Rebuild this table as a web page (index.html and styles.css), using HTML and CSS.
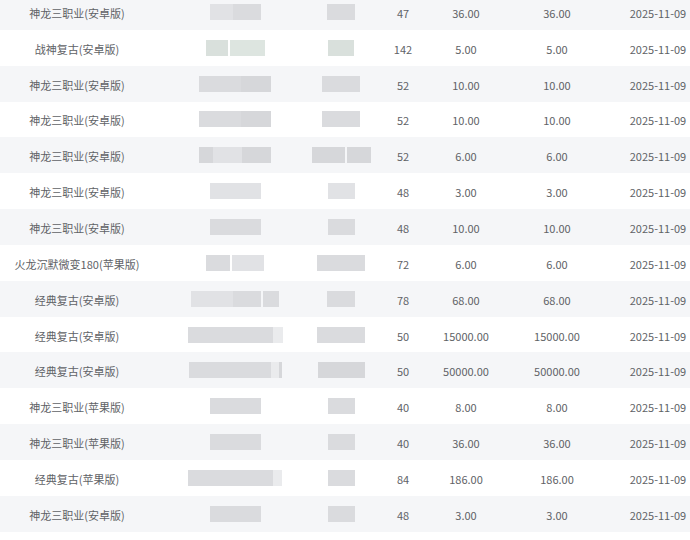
FILE: index.html
```html
<!DOCTYPE html>
<html lang="zh-CN">
<head>
<meta charset="utf-8">
<link rel="stylesheet" href="styles.css">
</head>
<body>
<div class="table">
  <div class="row odd"><div class="c">神龙三职业(安卓版)</div><div class="c"><div class="blur"><i class="s2" style="width:23px"></i><i class="s1" style="width:28px"></i></div></div><div class="c"><div class="blur"><i class="s1" style="width:28px"></i></div></div><div class="c">47</div><div class="c">36.00</div><div class="c">36.00</div><div class="c">2025-11-09</div></div>
  <div class="row"><div class="c">战神复古(安卓版)</div><div class="c"><div class="blur"><i class="g" style="width:22px"></i><i class="gap"></i><i class="g2" style="width:35px"></i></div></div><div class="c"><div class="blur"><i class="g" style="width:26px"></i></div></div><div class="c">142</div><div class="c">5.00</div><div class="c">5.00</div><div class="c">2025-11-09</div></div>
  <div class="row odd"><div class="c">神龙三职业(安卓版)</div><div class="c"><div class="blur"><i class="s1" style="width:42px"></i><i class="s0" style="width:30px"></i></div></div><div class="c"><div class="blur"><i class="s1" style="width:38px"></i></div></div><div class="c">52</div><div class="c">10.00</div><div class="c">10.00</div><div class="c">2025-11-09</div></div>
  <div class="row"><div class="c">神龙三职业(安卓版)</div><div class="c"><div class="blur"><i class="s1" style="width:42px"></i><i class="s0" style="width:30px"></i></div></div><div class="c"><div class="blur"><i class="s1" style="width:38px"></i></div></div><div class="c">52</div><div class="c">10.00</div><div class="c">10.00</div><div class="c">2025-11-09</div></div>
  <div class="row odd"><div class="c">神龙三职业(安卓版)</div><div class="c"><div class="blur"><i class="s0" style="width:14px"></i><i class="s2" style="width:29px"></i><i class="s0" style="width:29px"></i></div></div><div class="c"><div class="blur"><i class="s0" style="width:33px"></i><i class="gap"></i><i class="s0" style="width:24px"></i></div></div><div class="c">52</div><div class="c">6.00</div><div class="c">6.00</div><div class="c">2025-11-09</div></div>
  <div class="row"><div class="c">神龙三职业(安卓版)</div><div class="c"><div class="blur"><i class="s2" style="width:51px"></i></div></div><div class="c"><div class="blur"><i class="s2" style="width:27px"></i></div></div><div class="c">48</div><div class="c">3.00</div><div class="c">3.00</div><div class="c">2025-11-09</div></div>
  <div class="row odd"><div class="c">神龙三职业(安卓版)</div><div class="c"><div class="blur"><i class="s1" style="width:51px"></i></div></div><div class="c"><div class="blur"><i class="s1" style="width:27px"></i></div></div><div class="c">48</div><div class="c">10.00</div><div class="c">10.00</div><div class="c">2025-11-09</div></div>
  <div class="row"><div class="c">火龙沉默微变180(苹果版)</div><div class="c"><div class="blur"><i class="s1" style="width:24px"></i><i class="gap"></i><i class="s2" style="width:32px"></i></div></div><div class="c"><div class="blur"><i class="s1" style="width:48px"></i></div></div><div class="c">72</div><div class="c">6.00</div><div class="c">6.00</div><div class="c">2025-11-09</div></div>
  <div class="row odd"><div class="c">经典复古(安卓版)</div><div class="c"><div class="blur"><i class="s2" style="width:42px"></i><i class="s1" style="width:28px"></i><i class="gap"></i><i class="s1" style="width:16px"></i></div></div><div class="c"><div class="blur"><i class="s1" style="width:28px"></i></div></div><div class="c">78</div><div class="c">68.00</div><div class="c">68.00</div><div class="c">2025-11-09</div></div>
  <div class="row"><div class="c">经典复古(安卓版)</div><div class="c"><div class="blur"><i class="s1" style="width:85px"></i><i class="s3" style="width:10px"></i></div></div><div class="c"><div class="blur"><i class="s1" style="width:48px"></i></div></div><div class="c">50</div><div class="c">15000.00</div><div class="c">15000.00</div><div class="c">2025-11-09</div></div>
  <div class="row odd"><div class="c">经典复古(安卓版)</div><div class="c"><div class="blur"><i class="s1" style="width:82px"></i><i class="s3" style="width:8px"></i><i class="s0" style="width:3px"></i></div></div><div class="c"><div class="blur"><i class="s0" style="width:47px"></i></div></div><div class="c">50</div><div class="c">50000.00</div><div class="c">50000.00</div><div class="c">2025-11-09</div></div>
  <div class="row"><div class="c">神龙三职业(苹果版)</div><div class="c"><div class="blur"><i class="s1" style="width:51px"></i></div></div><div class="c"><div class="blur"><i class="s1" style="width:27px"></i></div></div><div class="c">40</div><div class="c">8.00</div><div class="c">8.00</div><div class="c">2025-11-09</div></div>
  <div class="row odd"><div class="c">神龙三职业(苹果版)</div><div class="c"><div class="blur"><i class="s1" style="width:51px"></i></div></div><div class="c"><div class="blur"><i class="s1" style="width:27px"></i></div></div><div class="c">40</div><div class="c">36.00</div><div class="c">36.00</div><div class="c">2025-11-09</div></div>
  <div class="row"><div class="c">经典复古(苹果版)</div><div class="c"><div class="blur"><i class="s1" style="width:85px"></i><i class="s3" style="width:9px"></i></div></div><div class="c"><div class="blur"><i class="s1" style="width:27px"></i></div></div><div class="c">84</div><div class="c">186.00</div><div class="c">186.00</div><div class="c">2025-11-09</div></div>
  <div class="row odd"><div class="c">神龙三职业(安卓版)</div><div class="c"><div class="blur"><i class="s1" style="width:51px"></i></div></div><div class="c"><div class="blur"><i class="s1" style="width:27px"></i></div></div><div class="c">48</div><div class="c">3.00</div><div class="c">3.00</div><div class="c">2025-11-09</div></div>
</div>
</body>
</html>
```
FILE: styles.css
```css
html, body {
  margin: 0;
  padding: 0;
  background: #ffffff;
  overflow: hidden;
}
body {
  font-family: "Noto Sans CJK SC", "Noto Sans", sans-serif;
  font-size: 11px;
  color: #606266;
}
.table {
  margin-top: -6px;
  width: 694px;
}
.row {
  display: grid;
  grid-template-columns: 154px 162px 50px 74px 52px 130px 72px;
  height: 35.85px;
  align-items: center;
  background: #ffffff;
}
.row.odd {
  background: #f5f6f8;
}
.c {
  text-align: center;
  white-space: nowrap;
  display: flex;
  justify-content: center;
  align-items: center;
  padding-top: 2px;
}
.blur {
  display: flex;
  height: 16px;
  margin-top: -2px;
}
.blur i {
  display: block;
  height: 16px;
}
.blur .gap {
  width: 2px;
  background: transparent;
}
.s0 { background: #d6d7da; }
.s1 { background: #dadbde; }
.s2 { background: #e1e2e5; }
.s3 { background: #eaebed; }
.g  { background: #d9e0dc; }
.g2 { background: #dde5e0; }
```
